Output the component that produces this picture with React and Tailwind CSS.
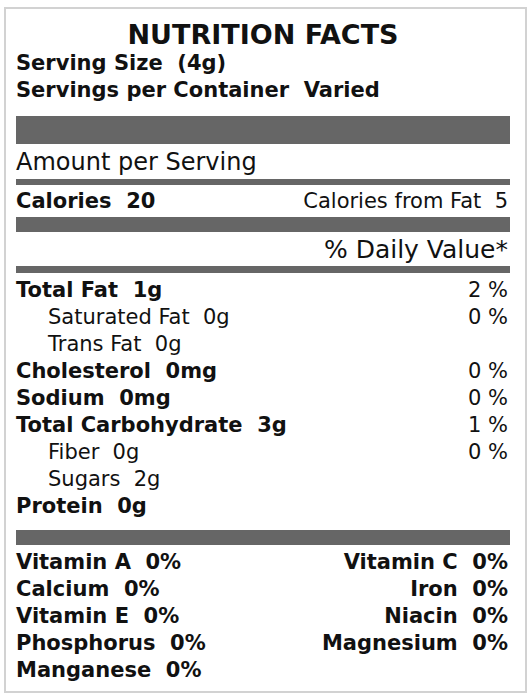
import React from "react";

const font = { fontFamily: '"DejaVu Sans", Verdana, sans-serif' };

function Bar({ h }) {
  return <div className={`bg-[#666666] w-full ${h}`} />;
}

function Row({ label, bold, indent, right }) {
  return (
    <div className="flex h-[27px] items-center justify-between whitespace-pre pr-[2px] text-[21px] leading-none text-[#111]">
      <span className={`${bold ? "font-bold" : "font-normal"} ${indent ? "pl-[32px]" : ""}`}>{label}</span>
      {right ? <span>{right}</span> : null}
    </div>
  );
}

export default function App() {
  const nutrients = [
    { label: "Total Fat  1g", bold: true, right: "2 %" },
    { label: "Saturated Fat  0g", indent: true, right: "0 %" },
    { label: "Trans Fat  0g", indent: true },
    { label: "Cholesterol  0mg", bold: true, right: "0 %" },
    { label: "Sodium  0mg", bold: true, right: "0 %" },
    { label: "Total Carbohydrate  3g", bold: true, right: "1 %" },
    { label: "Fiber  0g", indent: true, right: "0 %" },
    { label: "Sugars  2g", indent: true },
    { label: "Protein  0g", bold: true },
  ];
  const vitamins = [
    ["Vitamin A  0%", "Vitamin C  0%"],
    ["Calcium  0%", "Iron  0%"],
    ["Vitamin E  0%", "Niacin  0%"],
    ["Phosphorus  0%", "Magnesium  0%"],
    ["Manganese  0%", null],
  ];
  return (
    <div className="w-[530px] h-[700px] bg-white pt-[7px] pl-[4px]" style={font}>
      <div className="box-border w-[523px] h-[686px] border-2 border-[#d2d2d2] pl-[10px] pr-[15px] pt-[12px] flex flex-col text-[#111]">
        <div className="h-[26px] flex items-center justify-center text-[27px] font-bold leading-none whitespace-pre">
          NUTRITION FACTS
        </div>
        <div className="mt-[3px] h-[27px] flex items-center whitespace-pre text-[21px] font-bold leading-none">
          Serving Size  (4g)
        </div>
        <div className="h-[26px] flex items-center whitespace-pre text-[21px] font-bold leading-none">
          Servings per Container  Varied
        </div>
        <div className="mt-[13px]">
          <Bar h="h-[28px]" />
        </div>
        <div className="h-[35px] flex items-center text-[24px] leading-none whitespace-pre">Amount per Serving</div>
        <Bar h="h-[6px]" />
        <div className="h-[32px] flex items-center justify-between whitespace-pre pr-[2px] text-[21px] leading-none">
          <span className="font-bold">Calories  20</span>
          <span>Calories from Fat  5</span>
        </div>
        <Bar h="h-[15px]" />
        <div className="h-[34px] flex items-center justify-end pr-[2px] text-[25px] leading-none whitespace-pre">% Daily Value*</div>
        <Bar h="h-[7px]" />
        <div className="mt-[4px] flex flex-col">
          {nutrients.map((n) => (
            <Row key={n.label} {...n} />
          ))}
        </div>
        <div className="mt-[10px]">
          <Bar h="h-[15px]" />
        </div>
        <div className="mt-[4px] flex flex-col">
          {vitamins.map(([a, b]) => (
            <div key={a} className="flex h-[27px] items-center justify-between whitespace-pre pr-[2px] text-[21px] font-bold leading-none">
              <span>{a}</span>
              {b ? <span>{b}</span> : null}
            </div>
          ))}
        </div>
      </div>
    </div>
  );
}
